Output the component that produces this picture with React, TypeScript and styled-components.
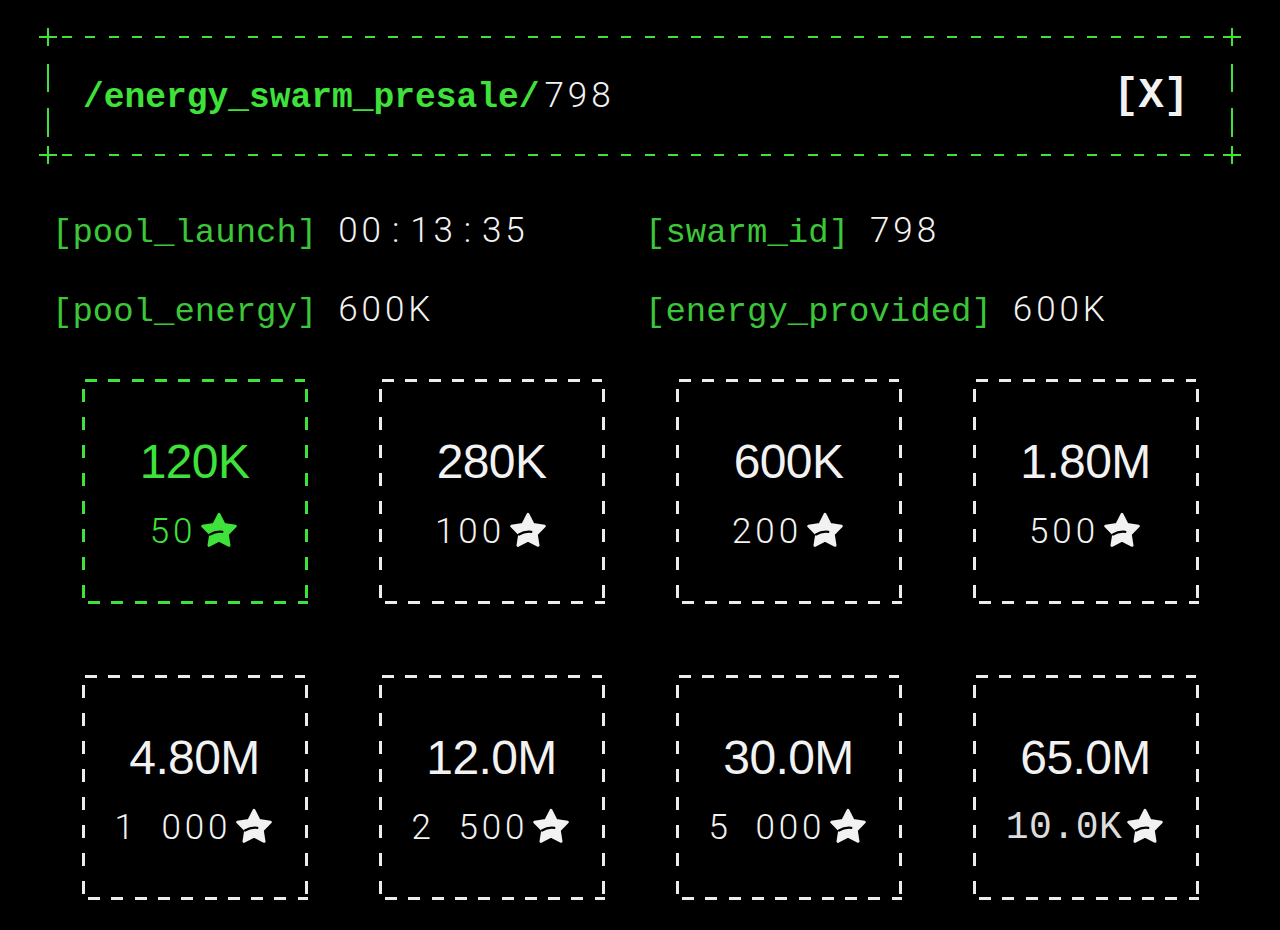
import React from 'react';
import styled, { createGlobalStyle, css } from 'styled-components';

const Green = '#3fe23b';
const LabelGreen = '#3cc63a';
const White = '#f2f2f2';

const GlobalStyle = createGlobalStyle`
  html, body {
    margin: 0;
    background: #000;
  }
  body {
    font-family: 'Liberation Sans', Arial, sans-serif;
    color: ${White};
  }
`;

const Page = styled.main`
  width: 1280px;
  height: 930px;
  overflow: hidden;
  box-sizing: border-box;
  padding-top: 36px;
  background: #000;
`;

// ascii-ish frame: dashed top/bottom, two bars on each side, "+" corners
const Frame = styled.header`
  position: relative;
  margin: 0 47px;
  height: 120px;
  box-sizing: border-box;
  padding: 0 44px 0 36px;
  display: flex;
  align-items: center;
  justify-content: space-between;
  background-image:
    repeating-linear-gradient(to right, ${Green} 0 10px, transparent 10px 23.3px),
    repeating-linear-gradient(to right, ${Green} 0 10px, transparent 10px 23.3px),
    linear-gradient(to bottom, transparent 28px, ${Green} 28px 56px, transparent 56px 72px, ${Green} 72px 101px, transparent 101px),
    linear-gradient(to bottom, transparent 28px, ${Green} 28px 56px, transparent 56px 72px, ${Green} 72px 101px, transparent 101px);
  background-size: calc(100% - 30px) 2px, calc(100% - 30px) 2px, 2px 100%, 2px 100%;
  background-position: 15px 0, 15px 100%, 0 0, 100% 0;
  background-repeat: no-repeat;
`;

const Corner = styled.span<{ $v: 'top' | 'bottom'; $h: 'left' | 'right' }>`
  position: absolute;
  width: 18px;
  height: 18px;
  ${p => p.$v}: -8px;
  ${p => p.$h}: -8px;
  background:
    linear-gradient(${Green}, ${Green}) center / 100% 2px no-repeat,
    linear-gradient(${Green}, ${Green}) center / 2px 100% no-repeat;
`;

const Path = styled.h1`
  margin: 0;
  font-family: 'Liberation Mono', monospace;
  font-weight: 700;
  font-size: 34.6px;
  color: ${Green};
  white-space: nowrap;
`;

const thinDigits = css`
  font-family: Roboto, 'Liberation Sans', sans-serif;
  font-weight: 300;
  font-size: 35px;
  letter-spacing: 3.9px;
  color: ${White};
`;

const PathId = styled.span`
  ${thinDigits};
  margin-left: 5px;
`;

const Close = styled.button`
  background: none;
  border: 0;
  padding: 0;
  cursor: pointer;
  font-family: 'Liberation Mono', monospace;
  font-weight: 700;
  font-size: 42px;
  color: ${White};
`;

const Info = styled.section`
  margin-top: 53px;
  padding-left: 52px;
  display: grid;
  grid-template-columns: 593px 1fr;
  row-gap: 29px;
  line-height: 44px;
`;

const Field = styled.div`
  white-space: nowrap;
`;

const Label = styled.span`
  font-family: 'Liberation Mono', monospace;
  font-size: 34px;
  color: ${LabelGreen};
`;

const Value = styled.span`
  ${thinDigits};
  margin-left: 21px;
`;

const Sep = styled.span`
  padding: 0 7px;
`;

const Packs = styled.section`
  margin-top: 40px;
  display: grid;
  grid-template-columns: repeat(4, 226px);
  grid-auto-rows: 226px;
  column-gap: 71px;
  row-gap: 70px;
  justify-content: center;
`;

const Card = styled.div<{ $active?: boolean }>`
  --c: ${p => (p.$active ? Green : '#ececec')};
  box-sizing: border-box;
  padding-top: 60px;
  display: flex;
  flex-direction: column;
  align-items: center;
  color: ${p => (p.$active ? Green : White)};
  cursor: pointer;
  background-image:
    repeating-linear-gradient(to right, var(--c) 0 12px, transparent 12px 23.3px),
    repeating-linear-gradient(to right, var(--c) 0 12px, transparent 12px 23.3px),
    repeating-linear-gradient(to bottom, var(--c) 0 13px, transparent 13px 28px),
    repeating-linear-gradient(to bottom, var(--c) 0 13px, transparent 13px 28px);
  background-size: calc(100% - 6px) 3px, calc(100% - 6px) 3px, 3px calc(100% - 12px), 3px calc(100% - 12px);
  background-position: 3px 1px, 6px 100%, 0 11px, 100% 11px;
  background-repeat: no-repeat;
`;

const Amount = styled.div`
  font-family: 'Liberation Sans', Arial, sans-serif;
  font-size: 48px;
  line-height: 48px;
  letter-spacing: -0.6px;
`;

const Price = styled.div`
  margin-top: 24px;
  display: flex;
  align-items: center;
  gap: 3px;
  height: 40px;
`;

const Stars = styled.span<{ $serif?: boolean }>`
  ${thinDigits};
  color: inherit;
  line-height: 40px;
  padding-top: 3px;
  white-space: pre;
  ${p =>
    p.$serif &&
    css`
      font-family: 'Liberation Mono', monospace;
      font-weight: 400;
      font-size: 38px;
      letter-spacing: 0.5px;
      color: #dcdcdc;
    `}
`;

const StarIcon = () => (
  <svg width="40" height="40" viewBox="0 0 24 24" aria-hidden="true">
    <polygon
      points="12,2.5 15.12,8.61 21.89,9.69 17.04,14.54 18.11,21.31 12,18.2 5.89,21.31 6.96,14.54 2.11,9.69 8.88,8.61"
      fill="currentColor"
      stroke="currentColor"
      strokeWidth="1.6"
      strokeLinejoin="round"
    />
    <path d="M6.6 14.7 Q10 12.6 14 13.1" fill="none" stroke="#000" strokeWidth="1.3" strokeLinecap="round" />
  </svg>
);

const fields = [
  { label: '[pool_launch]', value: '00:13:35' },
  { label: '[swarm_id]', value: '798' },
  { label: '[pool_energy]', value: '600K' },
  { label: '[energy_provided]', value: '600K' },
];

const packs = [
  { amount: '120K', stars: '50' },
  { amount: '280K', stars: '100' },
  { amount: '600K', stars: '200' },
  { amount: '1.80M', stars: '500' },
  { amount: '4.80M', stars: '1\u2007000' },
  { amount: '12.0M', stars: '2\u2007500' },
  { amount: '30.0M', stars: '5\u2007000' },
  { amount: '65.0M', stars: '10.0K', serif: true },
];

const renderTime = (v: string) =>
  v.split(':').map((part, i) => (
    <React.Fragment key={i}>
      {i > 0 && <Sep>:</Sep>}
      {part}
    </React.Fragment>
  ));

export default function App() {
  return (
    <>
      <GlobalStyle />
      <Page>
        <Frame>
          <Corner $v="top" $h="left" />
          <Corner $v="top" $h="right" />
          <Corner $v="bottom" $h="left" />
          <Corner $v="bottom" $h="right" />
          <Path>
            /energy_swarm_presale/<PathId>798</PathId>
          </Path>
          <Close>[X]</Close>
        </Frame>

        <Info>
          {fields.map(f => (
            <Field key={f.label}>
              <Label>{f.label}</Label>
              <Value>{renderTime(f.value)}</Value>
            </Field>
          ))}
        </Info>

        <Packs>
          {packs.map((p, i) => (
            <Card key={p.amount} $active={i === 0}>
              <Amount>{p.amount}</Amount>
              <Price>
                <Stars $serif={p.serif}>{p.stars}</Stars>
                <StarIcon />
              </Price>
            </Card>
          ))}
        </Packs>
      </Page>
    </>
  );
}
